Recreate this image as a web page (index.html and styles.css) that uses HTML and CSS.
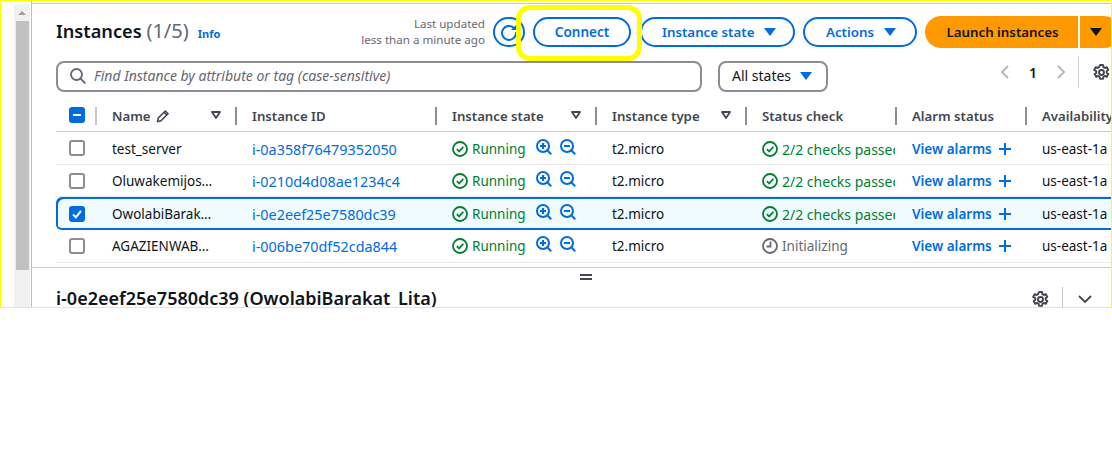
FILE: index.html
```html
<!DOCTYPE html>
<html lang="en">
<head>
    <meta charset="UTF-8">
    <meta name="viewport" content="width=device-width, initial-scale=1.0">
    <title>Instances</title>
    <link rel="stylesheet" href="styles.css">
</head>
<body>
    <svg class="defs" width="0" height="0" aria-hidden="true">
        <symbol id="ok" viewBox="0 0 16 16"><circle cx="8" cy="8" r="7" fill="none" stroke="currentColor" stroke-width="1.8"/><path d="M4.8 8.2l2.3 2.3 4.2-4.6" fill="none" stroke="currentColor" stroke-width="1.8"/></symbol>
        <symbol id="clock" viewBox="0 0 16 16"><circle cx="8" cy="8" r="7" fill="none" stroke="currentColor" stroke-width="1.8"/><path d="M8.5 3.5v5H4.5" fill="none" stroke="currentColor" stroke-width="1.8"/></symbol>
        <symbol id="zoomin" viewBox="0 0 16 16"><circle cx="7" cy="7" r="6" fill="none" stroke="currentColor" stroke-width="2"/><path d="M11.2 11.2l4 4M4 7h6M7 4v6" fill="none" stroke="currentColor" stroke-width="2"/></symbol>
        <symbol id="zoomout" viewBox="0 0 16 16"><circle cx="7" cy="7" r="6" fill="none" stroke="currentColor" stroke-width="2"/><path d="M11.2 11.2l4 4M4 7h6" fill="none" stroke="currentColor" stroke-width="2"/></symbol>
        <symbol id="gear" viewBox="0 0 16 16"><circle cx="8" cy="8" r="2.3" fill="none" stroke="currentColor" stroke-width="1.8"/><path d="M6.6 1h2.8l.4 2 1.3.7 1.9-.7 1.4 2.5-1.5 1.3v1.400l1.500 1.300-1.400 2.500-1.900-.7-1.300.7-.4 2H6.600l-.4-2-1.300-.7-1.900.7-1.400-2.500 1.500-1.300V6.800L1.100 5.500l1.400-2.500 1.900.7 1.300-.7z" fill="none" stroke="currentColor" stroke-width="1.800" stroke-linejoin="round"/></symbol>
        <symbol id="sort" viewBox="0 0 10 8"><path d="M1 1h8L5 7z" fill="none" stroke="currentColor" stroke-width="1.800" stroke-linejoin="round"/></symbol>
    </svg>

    <div class="frame">
        <div class="gutter"><div class="scrollbar"><span class="arrow"></span><div class="thumb"></div></div></div>
        <div class="main">
            <div class="panel">
                <div class="toolbar">
                    <h1>Instances <span class="count">(1/5)</span></h1>
                    <a class="info">Info</a>
                    <div class="updated">Last updated<br>less than a minute ago</div>
                    <button class="btn refresh"><svg width="20" height="20" viewBox="0 0 20 20"><path d="M15.500 6.500A7 7 0 1 0 17 10" fill="none" stroke="currentColor" stroke-width="2"/><path d="M12 8h6V2z" fill="currentColor"/></svg></button>
                    <button class="btn connect">Connect</button>
                    <button class="btn state">Instance state<i class="caret"></i></button>
                    <button class="btn actions">Actions<i class="caret"></i></button>
                    <button class="launch">Launch instances</button>
                    <button class="launch-more"><i class="caret dark"></i></button>
                </div>

                <div class="filters">
                    <div class="search">
                        <svg width="16" height="16" viewBox="0 0 16 16"><circle cx="6.500" cy="6.500" r="5.500" fill="none" stroke="currentColor" stroke-width="1.800"/><path d="M10.500 10.500l5 5" stroke="currentColor" stroke-width="1.800"/></svg>
                        <span>Find Instance by attribute or tag (case-sensitive)</span>
                    </div>
                    <div class="select">All states<i class="caret"></i></div>
                    <div class="pager">
                        <svg width="10" height="14" viewBox="0 0 10 14"><path d="M8 1L2 7l6 6" fill="none" stroke="currentColor" stroke-width="1.800"/></svg>
                        <b>1</b>
                        <svg width="10" height="14" viewBox="0 0 10 14"><path d="M2 1l6 6-6 6" fill="none" stroke="currentColor" stroke-width="1.800"/></svg>
                    </div>
                    <div class="prefs"><svg width="17" height="17"><use href="#gear"/></svg></div>
                </div>

                <div class="thead">
                    <div class="cell c-check"><span class="box indeterminate"></span></div>
                    <div class="cell c-name">Name <svg class="pencil" width="14" height="14" viewBox="0 0 14 14"><path d="M1.500 12.500l.8-3.500 7-7 2.700 2.700-7 7zM8 3.300l2.700 2.700" fill="none" stroke="currentColor" stroke-width="1.500"/></svg><svg class="sort" width="10" height="8"><use href="#sort"/></svg></div>
                    <div class="cell c-id">Instance ID</div>
                    <div class="cell c-state">Instance state<svg class="sort" width="10" height="8"><use href="#sort"/></svg></div>
                    <div class="cell c-type">Instance type<svg class="sort" width="10" height="8"><use href="#sort"/></svg></div>
                    <div class="cell c-status">Status check</div>
                    <div class="cell c-alarm">Alarm status</div>
                    <div class="cell c-az">Availability</div>
                </div>

                <div class="row">
                    <div class="cell c-check"><span class="box"></span></div>
                    <div class="cell c-name">test_server</div>
                    <div class="cell c-id"><a>i-0a358f76479352050</a></div>
                    <div class="cell c-state"><svg class="ic" width="16" height="16"><use href="#ok"/></svg><span class="good">Running</span><span class="zooms"><svg width="16" height="16"><use href="#zoomin"/></svg><svg width="16" height="16"><use href="#zoomout"/></svg></span></div>
                    <div class="cell c-type">t2.micro</div>
                    <div class="cell c-status"><svg class="ic" width="16" height="16"><use href="#ok"/></svg><span class="good clip">2/2 checks passed</span></div>
                    <div class="cell c-alarm"><a class="alarm">View alarms</a><span class="plus"></span></div>
                    <div class="cell c-az">us-east-1a</div>
                </div>
                <div class="row">
                    <div class="cell c-check"><span class="box"></span></div>
                    <div class="cell c-name">Oluwakemijos…</div>
                    <div class="cell c-id"><a>i-0210d4d08ae1234c4</a></div>
                    <div class="cell c-state"><svg class="ic" width="16" height="16"><use href="#ok"/></svg><span class="good">Running</span><span class="zooms"><svg width="16" height="16"><use href="#zoomin"/></svg><svg width="16" height="16"><use href="#zoomout"/></svg></span></div>
                    <div class="cell c-type">t2.micro</div>
                    <div class="cell c-status"><svg class="ic" width="16" height="16"><use href="#ok"/></svg><span class="good clip">2/2 checks passed</span></div>
                    <div class="cell c-alarm"><a class="alarm">View alarms</a><span class="plus"></span></div>
                    <div class="cell c-az">us-east-1a</div>
                </div>
                <div class="row selected">
                    <div class="cell c-check"><span class="box checked"><svg width="12" height="12" viewBox="0 0 12 12"><path d="M2 6.500l2.800 2.800L10 3" fill="none" stroke="#fff" stroke-width="2"/></svg></span></div>
                    <div class="cell c-name">OwolabiBarak…</div>
                    <div class="cell c-id"><a>i-0e2eef25e7580dc39</a></div>
                    <div class="cell c-state"><svg class="ic" width="16" height="16"><use href="#ok"/></svg><span class="good">Running</span><span class="zooms"><svg width="16" height="16"><use href="#zoomin"/></svg><svg width="16" height="16"><use href="#zoomout"/></svg></span></div>
                    <div class="cell c-type">t2.micro</div>
                    <div class="cell c-status"><svg class="ic" width="16" height="16"><use href="#ok"/></svg><span class="good clip">2/2 checks passed</span></div>
                    <div class="cell c-alarm"><a class="alarm">View alarms</a><span class="plus"></span></div>
                    <div class="cell c-az">us-east-1a</div>
                </div>
                <div class="row">
                    <div class="cell c-check"><span class="box"></span></div>
                    <div class="cell c-name">AGAZIENWAB…</div>
                    <div class="cell c-id"><a>i-006be70df52cda844</a></div>
                    <div class="cell c-state"><svg class="ic" width="16" height="16"><use href="#ok"/></svg><span class="good">Running</span><span class="zooms"><svg width="16" height="16"><use href="#zoomin"/></svg><svg width="16" height="16"><use href="#zoomout"/></svg></span></div>
                    <div class="cell c-type">t2.micro</div>
                    <div class="cell c-status"><svg class="ic grey" width="16" height="16"><use href="#clock"/></svg><span class="pending">Initializing</span></div>
                    <div class="cell c-alarm"><a class="alarm">View alarms</a><span class="plus"></span></div>
                    <div class="cell c-az">us-east-1a</div>
                </div>
            </div>

            <div class="splitter"><span></span></div>

            <div class="details">
                <h2>i-0e2eef25e7580dc39 (OwolabiBarakat_Lita)</h2>
                <svg class="detail-gear" width="17" height="17"><use href="#gear"/></svg>
                <span class="detail-sep"></span>
                <svg class="chevron" width="14" height="8" viewBox="0 0 14 8"><path d="M1 1l6 6 6-6" fill="none" stroke="currentColor" stroke-width="1.800"/></svg>
            </div>
        </div>
        <div class="highlight"></div>
    </div>
</body>
</html>
```

FILE: styles.css
```css
* {
    box-sizing: border-box;
}
body {
    margin: 0;
    background: #fff;
    font-family: "Noto Sans", "Open Sans", sans-serif;
    font-size: 13.5px;
    color: #0f141a;
}
.defs {
    display: block;
    height: 0;
}
a {
    color: #006ce0;
}
.frame {
    position: relative;
    display: flex;
    width: 1112px;
    height: 308px;
    border: 1px solid #ffff00;
    overflow: hidden;
}
.gutter {
    width: 31px;
    flex: none;
    padding: 3px 0 0 13px;
    border-right: 1px solid #bdbdbd;
}
.scrollbar {
    width: 16px;
    height: 100%;
    background: #f1f1f1;
}
.arrow {
    display: block;
    width: 0;
    height: 0;
    margin: 0 auto 6px;
    border: 4px solid transparent;
    border-top-width: 7px;
    border-bottom: 4px solid #a0a0a0;
}
.thumb {
    height: 249px;
    margin: 0 1px 0 2px;
    background: #c1c1c1;
}
.main {
    flex: none;
    width: 1080px;
    margin-top: 2px;
    border-top: 1px solid #c6c6cd;
}

/* toolbar */
.panel {
    padding: 13px 0 0 24px;
    height: 264px;
    border-bottom: 1px solid #c6c6cd;
}
.toolbar {
    display: flex;
    align-items: center;
    height: 30px;
    width: 1056px;
}
h1 {
    margin: -4px 0 0;
    font-size: 18.200px;
    font-weight: 600;
}
.count {
    font-size: 20px;
    font-weight: 400;
    color: #656871;
}
.info {
    margin-left: 9px;
    margin-top: 3px;
    font-size: 11px;
    font-weight: 700;
}
.updated {
    margin-left: auto;
    font-size: 11.600px;
    line-height: 16px;
    text-align: right;
    color: #656871;
}
.btn {
    height: 30px;
    border: 2px solid #006ce0;
    border-radius: 15px;
    background: #fff;
    color: #006ce0;
    font: 600 13.300px "Noto Sans", sans-serif;
    padding: 0;
}
.refresh {
    width: 32px;
    margin-left: 8px;
    display: flex;
    align-items: center;
    justify-content: center;
}
.connect {
    width: 98px;
    margin-left: 8px;
    font-size: 13.500px;
}
.state {
    width: 155px;
    margin-left: 9px;
    padding-left: 20px;
    text-align: left;
}
.actions {
    width: 114px;
    margin-left: 8px;
    padding-left: 21px;
    text-align: left;
}
.launch {
    width: 153px;
    height: 32px;
    flex: none;
    margin-left: 8px;
    border: 0;
    border-radius: 16px 0 0 16px;
    background: #ff9900;
    color: #0f141a;
    font: 600 13.300px "Noto Sans", sans-serif;
    padding: 0 0 0 2px;
}
.launch-more {
    width: 40px;
    height: 32px;
    flex: none;
    margin-left: 2px;
    margin-right: -8px;
    border: 0;
    padding: 0 8px 0 0;
    border-radius: 0 16px 16px 0;
    background: #ff9900;
}
.caret {
    display: inline-block;
    width: 0;
    height: 0;
    margin-left: 10px;
    border: 6px solid transparent;
    border-top: 8px solid #006ce0;
    border-bottom: 0;
    vertical-align: 1px;
}
.caret.dark {
    margin: 0;
    border-top-color: #0f141a;
}

/* filter row */
.filters {
    display: flex;
    align-items: center;
    height: 32px;
    margin-top: 13px;
}
.search {
    display: flex;
    align-items: center;
    gap: 8px;
    width: 646px;
    height: 31px;
    padding-left: 12px;
    border: 2px solid #8c8c94;
    border-radius: 8px;
    color: #656871;
    font-size: 14px;
    font-style: italic;
}
.search span {
    margin-top: -2px;
}
.select {
    width: 110px;
    height: 31px;
    margin-left: 16px;
    border: 2px solid #8c8c94;
    border-radius: 8px;
    font-size: 14px;
    line-height: 25px;
    padding-left: 12px;
}
.select .caret {
    margin-left: 9px;
}
.pager {
    display: flex;
    align-items: center;
    margin-left: 172px;
    margin-top: -8px;
    color: #b4b4bb;
}
.pager b {
    width: 46px;
    text-align: center;
    font-size: 14px;
    font-weight: 600;
    color: #0f141a;
}
.prefs {
    display: flex;
    align-items: center;
    height: 32px;
    margin-top: -8px;
    margin-left: 12px;
    padding-left: 14px;
    border-left: 1px solid #d1d5db;
    color: #424650;
}

/* table */
.thead, .row {
    display: grid;
    grid-template-columns: 39px 140px 200px 160px 150px 150px 130px 1fr;
    width: 1056px;
    align-items: center;
}
.thead {
    height: 33px;
    margin-top: 7px;
    border-bottom: 1px solid #c6c6cd;
    font-size: 13.200px;
    font-weight: 600;
    color: #424650;
}
.row {
    height: 33px;
    border-bottom: 1px solid #e9ebed;
}
.thead + .row + .row {
    height: 32px;
}
.cell {
    position: relative;
    display: flex;
    align-items: center;
    height: 100%;
    padding: 2px 0 0 17px;
    white-space: nowrap;
    overflow: hidden;
}
.thead + .row + .row .cell, .selected .cell {
    padding-top: 1px;
}
.row:last-child .cell {
    padding-top: 0;
}
.thead .cell::before {
    content: "";
    position: absolute;
    left: 0;
    top: 8px;
    width: 2px;
    height: 18px;
    background: #8c8c94;
}
.thead .c-check::before {
    display: none;
}
.thead .c-name::before {
    background: #c6c6cd;
}
.cell.c-check {
    padding: 0 0 0 13px;
}
.c-id a {
    font-size: 14.400px;
}
.sort {
    position: absolute;
    right: 14px;
    top: 12px;
}
.c-name .pencil {
    margin-left: 5px;
}
.box {
    display: flex;
    align-items: center;
    justify-content: center;
    width: 16px;
    height: 16px;
    border: 2px solid #8c8c94;
    border-radius: 3px;
    background: #fff;
}
.box.checked, .box.indeterminate {
    border: 0;
    background: #006ce0;
}
.box.indeterminate::after {
    content: "";
    width: 8px;
    height: 2px;
    background: #fff;
}
.selected {
    background: #f0fbff;
    border-bottom: 0;
    border-radius: 6px 0 0 6px;
    box-shadow: inset 2px 2px 0 #006ce0, inset 0 -2px 0 #006ce0;
}
.ic {
    flex: none;
    margin-right: 4px;
    color: #00802f;
}
.ic.grey {
    color: #656871;
}
.good {
    color: #00802f;
}
.clip {
    width: 113px;
    font-size: 14px;
    overflow: hidden;
}
.pending {
    color: #656871;
}
.zooms {
    display: flex;
    gap: 8px;
    margin-left: 10px;
    margin-top: -4px;
    color: #006ce0;
}
.alarm {
    font-weight: 600;
}
.plus {
    width: 12px;
    height: 12px;
    margin-left: 7px;
    background:
        linear-gradient(#006ce0, #006ce0) center / 12px 2px no-repeat,
        linear-gradient(#006ce0, #006ce0) center / 2px 12px no-repeat;
}

/* split pane */
.splitter {
    display: flex;
    justify-content: center;
    height: 20px;
    padding: 6px 0 0 28px;
}
.splitter span {
    width: 12px;
    height: 6px;
    border-top: 2px solid #424650;
    border-bottom: 2px solid #424650;
}
.details {
    display: flex;
    align-items: center;
    padding-left: 24px;
    height: 20px;
}
h2 {
    margin: 0;
    font-size: 18px;
    line-height: 20px;
    font-weight: 600;
}
.detail-gear {
    margin-left: auto;
    margin-top: 2px;
    color: #424650;
}
.detail-sep {
    width: 1px;
    height: 22px;
    margin-left: 13px;
    background: #c6c6cd;
}
.chevron {
    margin-left: 15px;
    margin-right: 20px;
    margin-top: 2px;
    color: #424650;
}

/* yellow marker drawn over the screenshot */
.highlight {
    position: absolute;
    left: 515px;
    top: 4px;
    width: 126px;
    height: 56px;
    border: 5px solid #ffff00;
    border-radius: 14px;
}
```
